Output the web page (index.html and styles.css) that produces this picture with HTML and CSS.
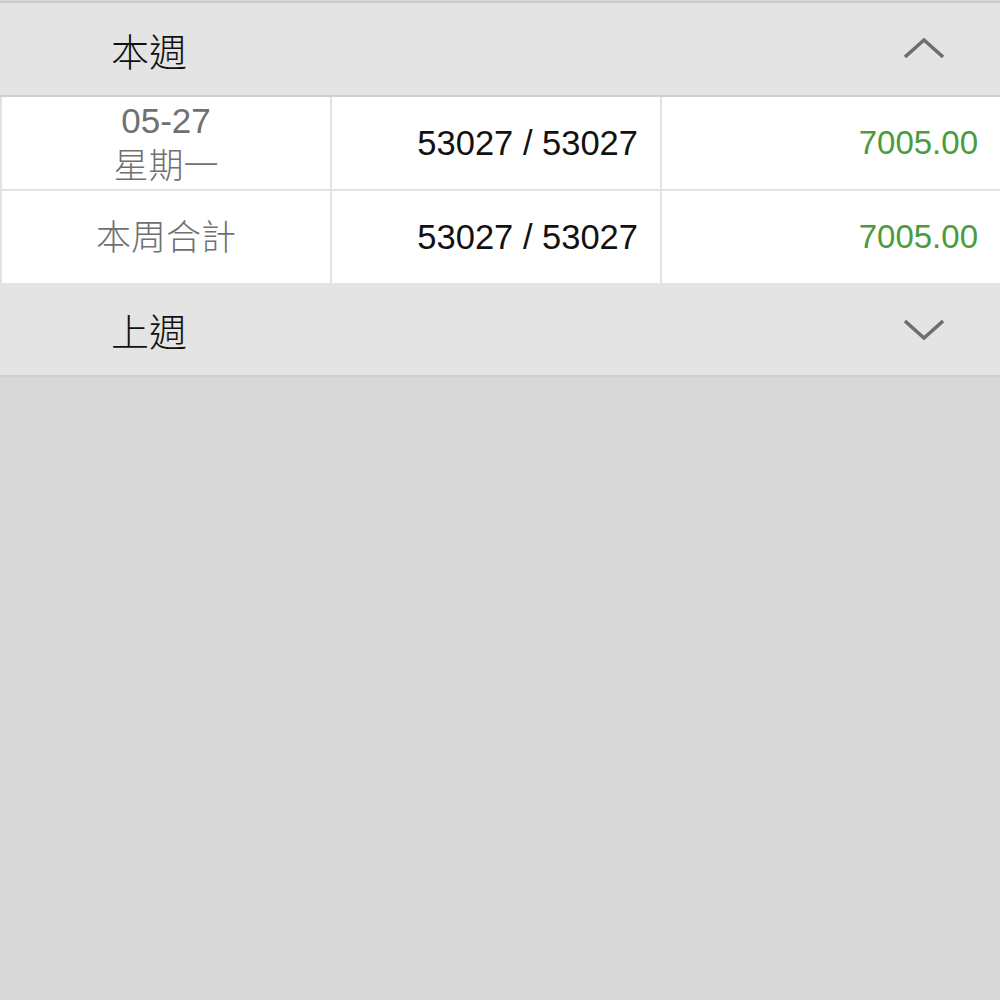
FILE: index.html
```html
<!DOCTYPE html>
<html lang="zh-Hant">
<head>
    <meta charset="UTF-8">
    <meta name="viewport" content="width=device-width, initial-scale=1.0">
    <title>週報表</title>
    <link rel="stylesheet" href="styles.css">
</head>
<body>
    <div class="list">
        <div class="week-head">
            <span class="week-title">本週</span>
            <svg class="chevron" width="40" height="22" viewBox="0 0 40 22">
                <polyline points="1,19 20,2 39,19" />
            </svg>
        </div>
        <div class="week-body">
            <div class="cell cell-date">
                <span>05-27</span>
                <span>星期一</span>
            </div>
            <div class="cell cell-count">53027 / 53027</div>
            <div class="cell cell-amount">7005.00</div>

            <div class="cell cell-date">本周合計</div>
            <div class="cell cell-count">53027 / 53027</div>
            <div class="cell cell-amount">7005.00</div>
        </div>
        <div class="week-head">
            <span class="week-title">上週</span>
            <svg class="chevron" width="40" height="22" viewBox="0 0 40 22">
                <polyline points="1,3 20,20 39,3" />
            </svg>
        </div>
    </div>
</body>
</html>
```

FILE: styles.css
```css
body {
    margin: 0;
    background: #d8d8d8;
    font-family: "Liberation Sans", "Noto Sans CJK TC", sans-serif;
    color: #111;
}
.list {
    margin-top: 1px;
    border-top: 2px solid #cdcdcd;
}
.week-head {
    height: 92px;
    display: flex;
    align-items: center;
    justify-content: space-between;
    padding: 0 56px 0 111px;
    background: #e4e4e4;
    border-bottom: 2px solid #d0d0d0;
}
.week-title {
    font-size: 38px;
    font-weight: 300;
    font-family: "Noto Sans CJK TC", sans-serif;
}
.chevron polyline {
    fill: none;
    stroke: #6e6e6e;
    stroke-width: 3.5;
}
.week-body {
    display: grid;
    grid-template-columns: 328px 328px 1fr;
    grid-auto-rows: 92px;
    gap: 2px;
    padding-left: 2px;
    background: #e2e2e2;
}
.cell {
    background: #fff;
    display: flex;
    align-items: center;
    font-size: 33px;
}
.cell-date {
    flex-direction: column;
    justify-content: center;
    color: #707070;
    line-height: 45px;
    font-size: 35px;
    font-weight: 300;
}
.cell-count {
    justify-content: flex-end;
    padding-right: 22px;
    font-size: 34.5px;
}
.cell-amount {
    justify-content: flex-end;
    padding-right: 22px;
    color: #4a9b3c;
}
```
